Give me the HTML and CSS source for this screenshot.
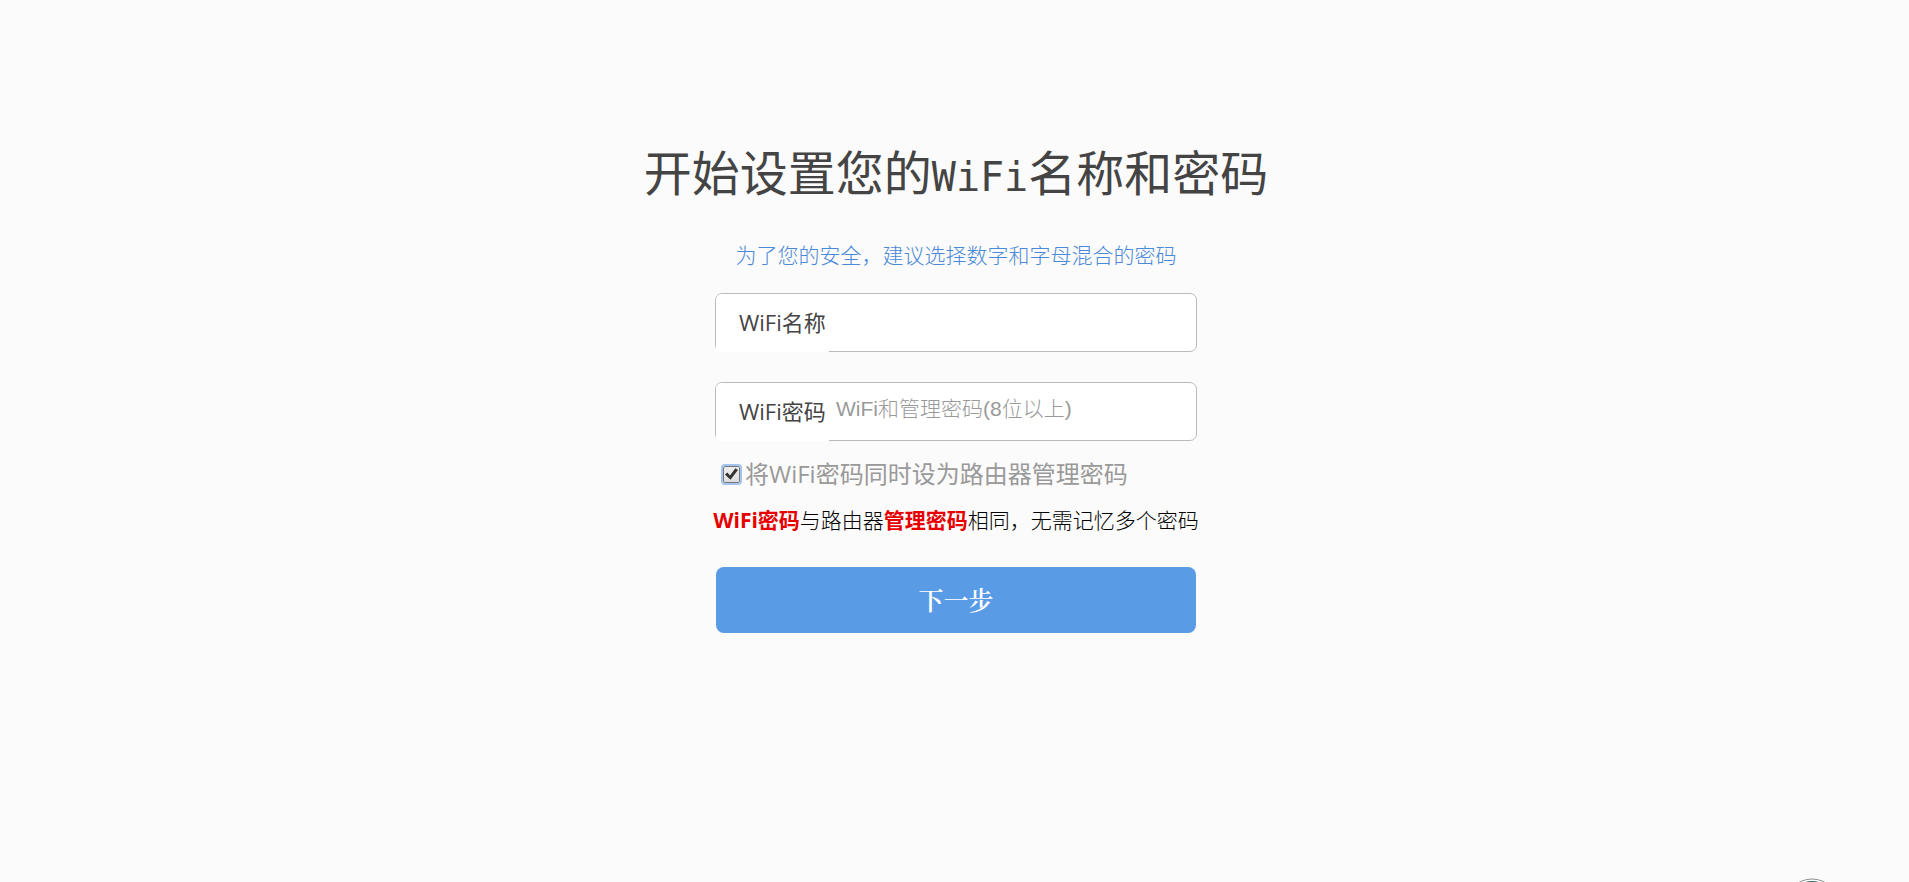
FILE: index.html
```
<!DOCTYPE html>
<html lang="zh-CN">
<head>
  <meta charset="utf-8">
  <title>WiFi设置</title>
  <link rel="stylesheet" href="styles.css">
</head>
<body>
  <main class="setup">
    <h1 class="title">开始设置您的<span class="title-latin">WiFi</span>名称和密码</h1>
    <p class="tip">为了您的安全，建议选择数字和字母混合的密码</p>

    <form class="setup-form">
      <div class="field">
        <label for="wifiName">WiFi名称</label>
        <input type="text" id="wifiName">
      </div>
      <div class="field">
        <label for="wifiPassword">WiFi密码</label>
        <input type="text" id="wifiPassword" placeholder="WiFi和管理密码(8位以上)">
      </div>

      <div class="same-password">
        <input type="checkbox" id="samePassword" checked>
        <label for="samePassword">将WiFi密码同时设为路由器管理密码</label>
      </div>
      <p class="note"><strong>WiFi密码</strong>与路由器<strong>管理密码</strong>相同，无需记忆多个密码</p>

      <button type="submit" class="next-button">下一步</button>
    </form>
  </main>

  <!-- Floating badge, only its top edge shows -->
  <div class="badge">
    <svg width="56" height="56" viewBox="0 0 56 56" aria-hidden="true">
      <circle cx="28" cy="28" r="27" fill="#fff" stroke="#8c8c8c"/>
      <circle cx="28" cy="28" r="25" fill="#1f6b5a"/>
    </svg>
  </div>
</body>
</html>
```
FILE: styles.css
```
* {
  box-sizing: border-box;
}

body {
  position: relative;
  min-height: 100vh;
  margin: 0;
  background-color: #fbfbfb;
  font-family: "Open Sans", "Noto Sans CJK SC", sans-serif;
  font-size: 21px;
  color: #000;
}

.setup {
  display: flex;
  flex-direction: column;
  align-items: center;
  padding: 134px 0 0 3px;
}

.title {
  margin: 0;
  font-family: "Noto Sans CJK SC", sans-serif;
  font-size: 48px;
  font-weight: 400;
  line-height: 72px;
  color: #444;
}

.title-latin {
  font-family: "DejaVu Sans Mono", monospace;
  font-size: 40px;
}

.tip {
  margin: 27px 0 23px;
  font-weight: 300;
  line-height: 30px;
  color: #4a88d8;
}

.setup-form {
  display: flex;
  flex-direction: column;
  align-items: center;
  width: 100%;
  max-width: 482px;
}

.field {
  display: flex;
  width: 100%;
  height: 59px;
  margin-bottom: 30px;
  border: 1px solid #bbb;
  border-radius: 7px;
  background-color: #fff;
}

/* the label background covers the bottom border */
.field label {
  width: 113px;
  margin-bottom: -1px;
  padding-left: 23px;
  border-top-left-radius: 6px;
  background-color: #fff;
  font-size: 22px;
  line-height: 56px;
  white-space: nowrap;
  color: #444;
}

.field input {
  flex: 1;
  min-width: 0;
  padding: 0 7px 6px;
  border: none;
  border-radius: 7px;
  background: none;
  font-family: "Liberation Sans", "Noto Sans CJK SC", sans-serif;
  font-size: 21px;
  outline: none;
}

.field input::placeholder {
  font-weight: 300;
  color: #999;
}

.same-password {
  display: flex;
  align-items: center;
  gap: 5px;
  align-self: flex-start;
  margin-top: -14px;
  padding-left: 8px;
  font-size: 24px;
  line-height: 34px;
  color: #999;
}

.same-password input {
  appearance: none;
  display: grid;
  place-items: center;
  width: 17px;
  height: 17px;
  margin: 0;
  border: 1px solid #777;
  border-radius: 2px;
  background: linear-gradient(#eee, #ddd);
  outline: 2px solid #a4c4f0;
}

.same-password input::before {
  content: "";
  width: 13px;
  height: 12px;
  background-color: #333;
  clip-path: polygon(0 55%, 18% 38%, 38% 62%, 80% 2%, 100% 16%, 42% 98%);
}

.note {
  margin: 14px 0 32px;
  font-weight: 300;
  line-height: 30px;
  white-space: nowrap;
}

.note strong {
  font-weight: 700;
  color: #e60000;
}

.next-button {
  width: 480px;
  max-width: 100%;
  height: 66px;
  padding: 0 0 2px;
  border: none;
  border-radius: 8px;
  background-color: #5a9be5;
  font-family: "Liberation Serif", "Noto Serif CJK SC", "Noto Sans CJK SC", serif;
  font-size: 25px;
  font-weight: 600;
  color: #fff;
  cursor: pointer;
}

.badge {
  position: absolute;
  right: 69px;
  bottom: 0;
  height: 4px;
  overflow: hidden;
}
```
